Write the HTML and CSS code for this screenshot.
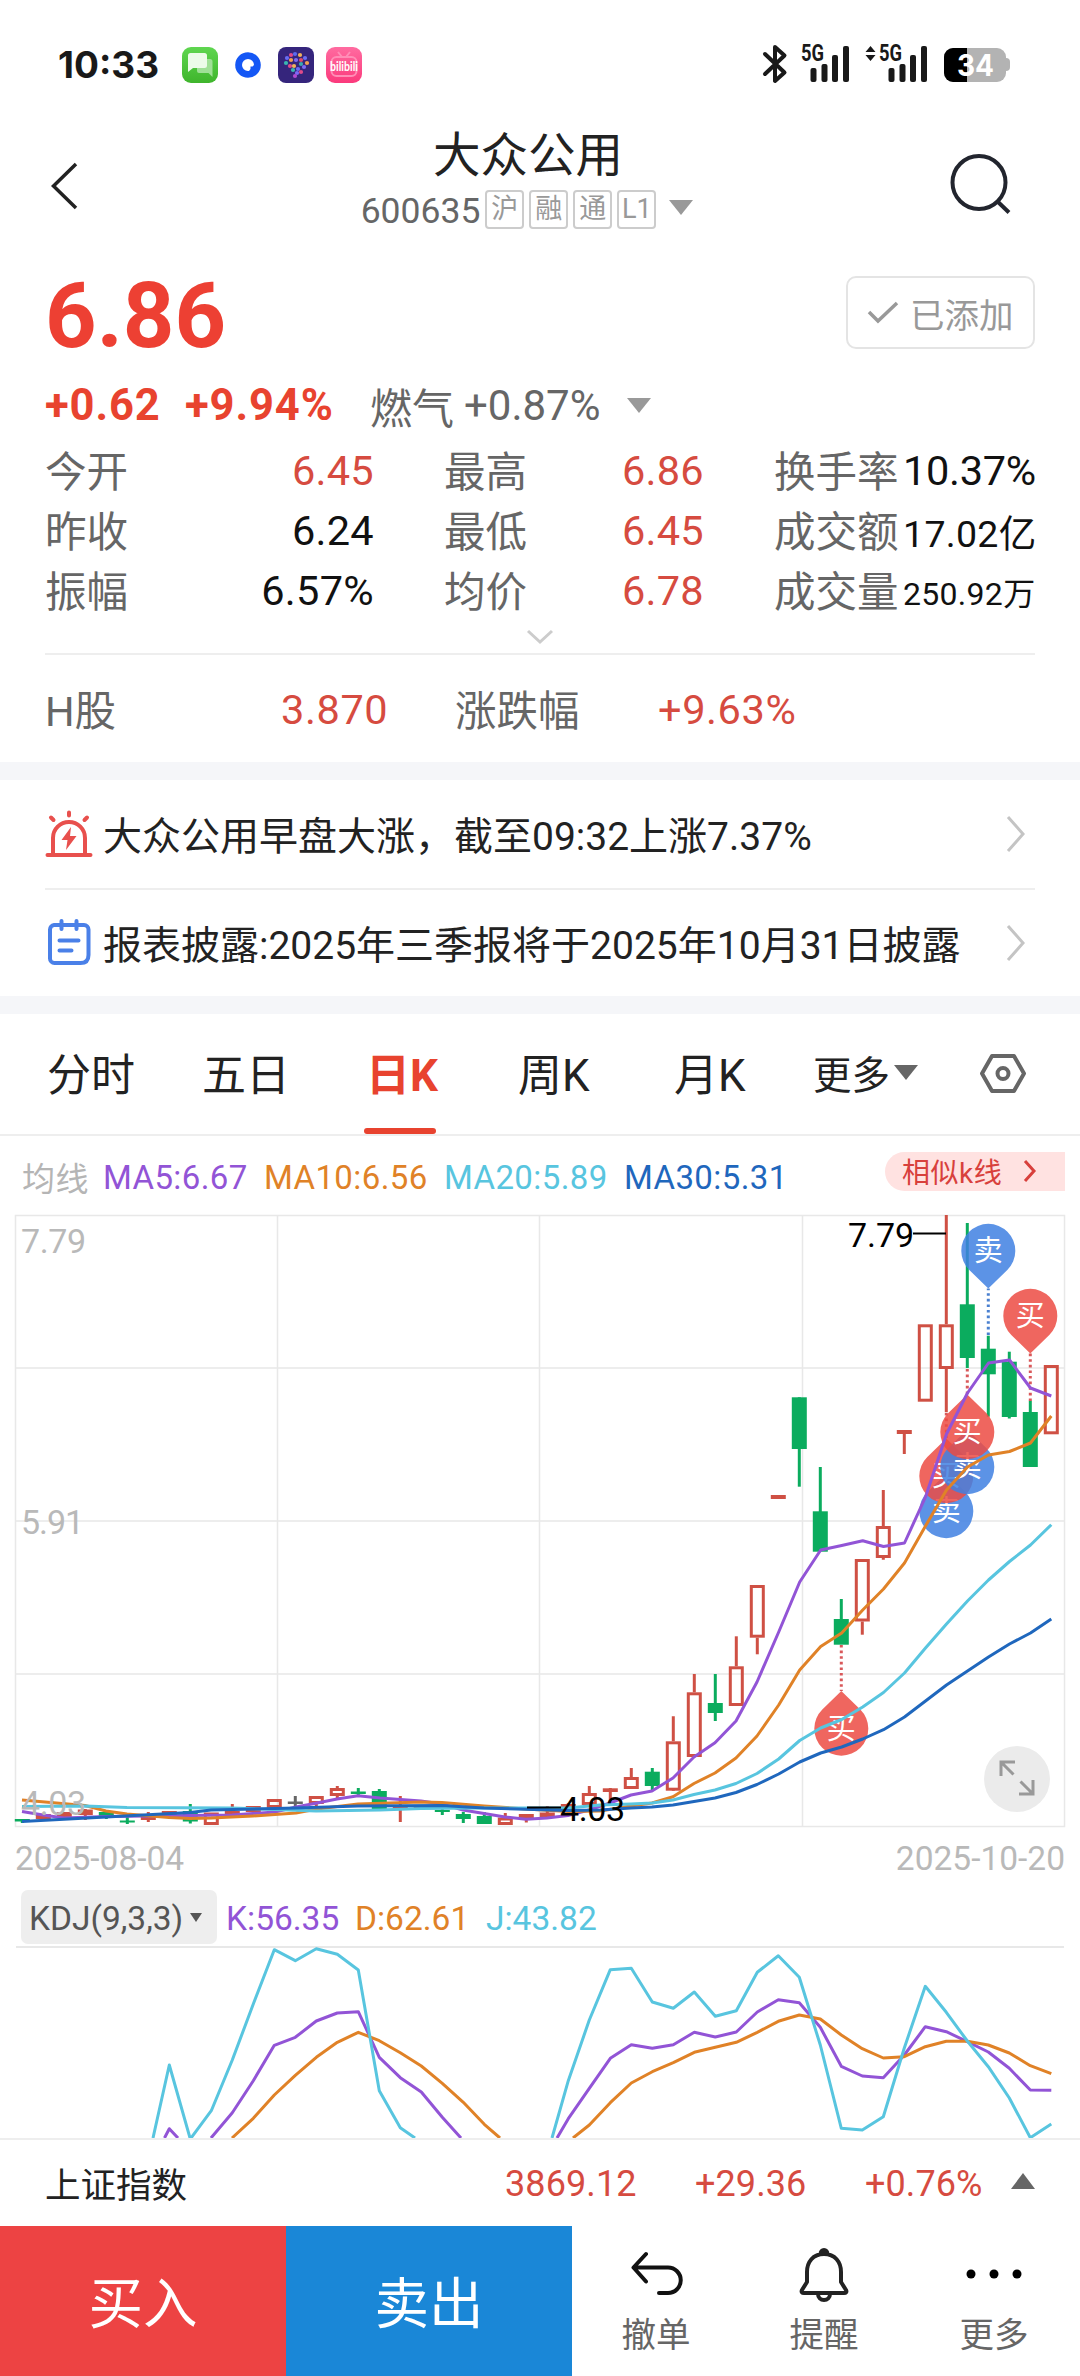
FILE: index.html
```html
<!DOCTYPE html>
<html lang="zh-CN">
<head>
<meta charset="utf-8">
<title>大众公用 600635</title>
<link rel="stylesheet" href="styles.css">
</head>
<body>
<div class="status">
  <span class="clock">10:33</span>
  <svg class="apps" width="186" height="40" viewBox="180 45 186 40">
    <defs>
      <linearGradient id="gm" x1="0" y1="0" x2="0" y2="1"><stop offset="0" stop-color="#5fd650"/><stop offset="1" stop-color="#3fb52c"/></linearGradient>
      <linearGradient id="gb" x1="0" y1="0" x2="0" y2="1"><stop offset="0" stop-color="#ff6ba0"/><stop offset="1" stop-color="#fb3a7c"/></linearGradient>
    </defs>
    <rect x="182" y="47" width="36" height="36" rx="9" fill="url(#gm)"/>
    <path d="M197 59h13a2.500 2.500 0 0 1 2.500 2.500V77l-4-4h-9.500a2 2 0 0 1-2-2z" fill="#9fe096"/>
    <path d="M190.500 53h14a2.500 2.500 0 0 1 2.500 2.500v10a2.500 2.500 0 0 1-2.500 2.500H193l-5 4V55.500a2.500 2.500 0 0 1 2.500-2.500z" fill="#ecfbe9"/>
    <circle cx="248" cy="65" r="12.800" fill="#1457f5"/>
    <path d="M248 59a6 6 0 0 1 6 6l-1.500 1.500h-2V69l-1.500 2h-1a6 6 0 0 1 0-12z" fill="#fff"/>
    <rect x="278" y="47" width="36" height="36" rx="8" fill="#35257c"/>
    <g id="dots"></g>
    <rect x="326" y="47" width="36" height="36" rx="9" fill="url(#gb)"/>
    <rect x="331.500" y="57" width="25" height="19" rx="5" fill="none" stroke="#ff8db6" stroke-width="2"/>
    <path d="M338 52l4 5M350 52l-4 5" stroke="#ff8db6" stroke-width="2"/>
    <text x="330" y="71" class="bili" textLength="28" lengthAdjust="spacingAndGlyphs">bilibili</text>
  </svg>
  <svg class="signals" width="250" height="52" viewBox="760 38 250 52">
    <path d="M765 54l19.500 18.500L775 81V47l9.500 8.500L765 74" fill="none" stroke="#191919" stroke-width="4" stroke-linejoin="round" stroke-linecap="round"/>
    <g fill="#191919">
      <text x="801" y="61" class="net" textLength="23" lengthAdjust="spacingAndGlyphs">5G</text>
      <rect x="810.500" y="68" width="6" height="14" rx="2"/><rect x="821.500" y="64" width="6" height="18" rx="2"/><rect x="832" y="55" width="6" height="27" rx="2"/><rect x="843" y="46" width="6" height="36" rx="2"/>
      <path d="M865.500 52l5-6 5 6zM865.500 55l5 6 5-6z"/>
      <text x="879" y="61" class="net" textLength="23" lengthAdjust="spacingAndGlyphs">5G</text>
      <rect x="888.500" y="68" width="6" height="14" rx="2"/><rect x="899.500" y="64" width="6" height="18" rx="2"/><rect x="910" y="55" width="6" height="27" rx="2"/><rect x="921" y="46" width="6" height="36" rx="2"/>
    </g>
    <rect x="1000" y="58" width="10" height="13" rx="4" fill="#b3b3b3"/>
    <rect x="944" y="48" width="62" height="34" rx="9" fill="#b3b3b3"/>
    <path d="M967 48H953a9 9 0 0 0-9 9v16a9 9 0 0 0 9 9h14z" fill="#000"/>
    <text x="957" y="76" class="bat" textLength="37" lengthAdjust="spacingAndGlyphs">34</text>
  </svg>
</div>

<header class="head">
  <svg width="34" height="54" viewBox="48 159 34 54"><path d="M76 164L53.500 186 76 208" fill="none" stroke="#222" stroke-width="3.500"/></svg>
  <div class="title">
    <h1>大众公用</h1>
    <div class="code"><span>600635</span><i>沪</i><i>融</i><i>通</i><i>L1</i><b class="down"></b></div>
  </div>
  <svg width="66" height="66" viewBox="948 154 66 66"><circle cx="979" cy="183.500" r="26.500" fill="none" stroke="#22252e" stroke-width="4"/><path d="M997 202l12 11.500" stroke="#22252e" stroke-width="4"/></svg>
</header>

<section class="quote">
  <div class="price-row">
    <strong>6.86</strong>
    <div class="added"><svg width="32" height="24" viewBox="0 0 32 24"><path d="M2 11l9 9L30 2" fill="none" stroke="#999" stroke-width="3.500"/></svg><span>已添加</span></div>
  </div>
  <div class="change"><b>+0.62</b><b>+9.94%</b><span>燃气</span><em>+0.87%</em><i class="down"></i></div>
  <div class="stats">
    <label>今开</label><span class="up">6.45</span><label>最高</label><span class="up">6.86</span><label>换手率</label><span class="pc">10.37%</span>
    <label>昨收</label><span>6.24</span><label>最低</label><span class="up">6.45</span><label>成交额</label><span class="mid">17.02亿</span>
    <label>振幅</label><span>6.57%</span><label>均价</label><span class="up">6.78</span><label>成交量</label><span class="small">250.92万</span>
  </div>
  <div class="more"><svg width="30" height="18" viewBox="0 0 30 18"><path d="M3 3l12 11L27 3" fill="none" stroke="#ccc" stroke-width="3"/></svg></div>
  <div class="hshare"><label>H股</label><span class="up">3.870</span><label>涨跌幅</label><span class="up">+9.63%</span></div>
</section>

<section class="news">
  <div class="item">
    <svg width="48" height="50" viewBox="45 808 48 50"><g fill="none" stroke="#e8504d" stroke-width="4" stroke-linecap="round"><path d="M53 853v-16a16 16 0 0 1 32 0v16M47.500 854h43M69 811.500v3M51 816.500l2.500 2.500M87 816.500l-2.500 2.500" /></g><path d="M71 826l-9.500 13h6L66 849l10.500-14h-6.500z" fill="#e8504d"/></svg>
    <p>大众公用早盘大涨，截至09:32上涨7.37%</p>
    <svg class="go" width="22" height="38" viewBox="0 0 22 38"><path d="M3 2l15 17L3 36" fill="none" stroke="#c4c4c4" stroke-width="3"/></svg>
  </div>
  <div class="item">
    <svg width="48" height="50" viewBox="45 918 48 50"><g fill="none" stroke="#4a80e8" stroke-width="4" stroke-linecap="round"><path d="M54 925h30a4.500 4.500 0 0 1 4.500 4.500V955q0 8-8 8H54.500a4.500 4.500 0 0 1-4.500-4.500v-29a4.500 4.500 0 0 1 4-4.500zM61.500 921v8M76.500 921v8M59.500 940.500h19M59.500 950.500h12"/></g></svg>
    <p>报表披露:2025年三季报将于2025年10月31日披露</p>
    <svg class="go" width="22" height="38" viewBox="0 0 22 38"><path d="M3 2l15 17L3 36" fill="none" stroke="#c4c4c4" stroke-width="3"/></svg>
  </div>
</section>

<nav class="tabs">
  <span>分时</span><span>五日</span><span class="on">日K</span><span>周K</span><span>月K</span><span class="tm">更多<i class="down dark"></i></span>
  <svg width="50" height="46" viewBox="977 1050 50 46"><path d="M991 1055h22l10 17.500-10 17.500h-22l-10-17.500z" fill="none" stroke="#666" stroke-width="4" stroke-linejoin="round"/><circle cx="1002" cy="1072.500" r="5.500" fill="none" stroke="#666" stroke-width="4"/></svg>
</nav>

<div class="ma"><span>均线</span><span class="p">MA5:6.67</span><span class="o">MA10:6.56</span><span class="c">MA20:5.89</span><span class="b">MA30:5.31</span>
  <div class="similar">相似k线<svg width="14" height="24" viewBox="0 0 14 24"><path d="M2 2l9 10-9 10" fill="none" stroke="#d8403c" stroke-width="3"/></svg></div>
</div>

<svg class="kline" width="1080" height="630" viewBox="0 1206 1080 630">
  <g stroke="#e8e8e8" stroke-width="1.500" fill="none">
    <rect x="15.500" y="1215.500" width="1049" height="611"/>
    <path d="M16 1368H1064M16 1521H1064M16 1674H1064M277.500 1216V1826M539.500 1216V1826M802.500 1216V1826"/>
  </g>
  <g id="candles"></g>
  <g id="pins"></g>
  <g id="averages"></g>
  <g class="axis"><text x="21" y="1253" textLength="65">7.79</text><text x="21" y="1534" textLength="63">5.91</text><text x="21" y="1815" textLength="65">4.03</text></g>
  <path d="M913 1233.500h33M527 1807.500h34" stroke="#000" stroke-width="2"/>
  <g class="peak"><text x="848" y="1247" textLength="66">7.79</text><text x="560" y="1821" textLength="65">4.03</text></g>
  <circle cx="1017" cy="1779" r="33" fill="#ebebeb"/>
  <path d="M1001 1776v-14h14M1001.500 1762.500l12 12M1033 1780v14h-14M1032.500 1793.500l-12-12" fill="none" stroke="#999" stroke-width="3"/>
</svg>

<div class="dates"><span>2025-08-04</span><span>2025-10-20</span></div>

<div class="kdj"><div class="pick"><span>KDJ(9,3,3)</span><i></i></div><span class="p">K:56.35</span><span class="o">D:62.61</span><span class="c">J:43.82</span></div>
<svg class="osc" width="1080" height="192" viewBox="0 1946 1080 192"><path d="M16 1947H1064" stroke="#e8e8e8" stroke-width="2"/><g id="osc"></g></svg>

<div class="index"><span>上证指数</span><b>3869.12</b><b>+29.36</b><b>+0.76%</b><i></i></div>

<footer class="actions">
  <div class="buy">买入</div><div class="sell">卖出</div>
  <div class="tools">
    <div><svg width="60" height="60" viewBox="626 2244 60 60"><path d="M646 2254l-12.500 13.500 12.500 14M634 2267.500h34a12.500 12.500 0 0 1 0 25.500h-9" fill="none" stroke="#111" stroke-width="4" stroke-linecap="round" stroke-linejoin="round"/></svg><span>撤单</span></div>
    <div><svg width="60" height="60" viewBox="794 2244 60 60"><path d="M820.500 2254a3.500 4 0 0 1 7 0M824 2254c-11 0-17 8-17 18v10l-5 8c-1 2 0 3 2 3h40c2 0 3-1 2-3l-5-8v-10c0-10-6-18-17-18zM818 2294a6 6 0 0 0 12 0" fill="none" stroke="#222" stroke-width="4" stroke-linejoin="round"/></svg><span>提醒</span></div>
    <div><svg width="60" height="60" viewBox="965 2244 60 60"><g fill="#000"><circle cx="972" cy="2274" r="4.500"/><circle cx="995" cy="2274" r="4.500"/><circle cx="1018" cy="2274" r="4.500"/></g></svg><span>更多</span></div>
  </div>
</footer>
<script src="chart.js"></script>
</body>
</html>
```
FILE: styles.css
```css
* { box-sizing: border-box; margin: 0; padding: 0; }
body { width: 1080px; height: 2376px; overflow: hidden; background: #fff; color: #222; font-family: Roboto, "Noto Sans CJK SC", sans-serif; display: flex; flex-direction: column; }
body > * { flex: none; }
svg { display: block; flex: none; }
i, em { font-style: normal; }
span, b, label, i { white-space: nowrap; }
.down { border: 12px solid transparent; border-top: 15px solid #999; border-bottom: 0; display: inline-block; width: 0; height: 0; }
.dark { border-top-color: #666; }

.status { height: 128px; padding: 0 70px 0 58px; display: flex; align-items: center; }
.clock { width: 122px; font: 700 37px Inter, sans-serif; color: #191919; }
.apps { margin-top: 2px; overflow: visible; }
.signals { margin-left: auto; overflow: visible; }
.bili { font: 700 13px Lato, sans-serif; fill: #fff; }
.net { font: 700 23px Roboto, sans-serif; }
.bat { font: 700 30px Inter, sans-serif; fill: #fff; }

.head { height: 132px; padding: 0 66px 0 48px; display: flex; align-items: center; justify-content: space-between; }
.head > svg { margin-top: -16px; }
.title { display: flex; flex-direction: column; align-items: center; margin-left: 24px; height: 132px; padding-top: 4px; }
h1 { font-size: 47.500px; font-weight: 400; line-height: 48px; padding-left: 2px; }
.code { display: flex; align-items: center; height: 39px; margin-top: 10px; gap: 5px; color: #666; font-size: 35.500px; }
.code span { padding-top: 2px; }
.code i { width: 39px; height: 39px; border: 2px solid #ccc; border-radius: 4px; font-size: 27px; line-height: 34px; text-align: center; color: #999; }
.code .down { margin-left: 8px; margin-top: -4px; }

.quote { height: 502px; padding: 0 45px; display: flex; flex-direction: column; }
.price-row { display: flex; justify-content: space-between; height: 110px; padding-top: 16px; }
.price-row strong { font-size: 90px; line-height: 82px; color: #ed4033; }
.added { width: 189px; height: 73px; border: 2px solid #e4e4e4; border-radius: 10px; display: flex; align-items: center; padding-left: 19px; gap: 11px; font-size: 34.500px; color: #999; }
.change { height: 70px; padding-top: 2px; display: grid; grid-template-columns: 140px 185px 94px 163px 24px; align-items: center; font-size: 42px; color: #666; }
.change b { color: #e8432f; font-size: 43.500px; letter-spacing: .9px; }
.stats { display: grid; height: 180px; grid-template-columns: 100px 229px 170px 160px 199px 132px; grid-template-rows: repeat(3, 60px); align-items: center; font-size: 41.500px; }
.stats span { text-align: right; color: #111; letter-spacing: .3px; padding-top: 4px; }
.stats label, .hshare label { color: #666; }
.stats label { padding-top: 1px; }
.stats label:nth-of-type(3n+2), .stats label:nth-of-type(3n) { padding-left: 70px; }
.stats .up, .up { color: #d64b40; }
.stats .pc { letter-spacing: -.3px; }
.stats .mid { font-size: 37.500px; padding-right: 2px; }
.stats .small { font-size: 32px; padding-right: 2px; }
.more { height: 36px; display: flex; align-items: center; justify-content: center; border-bottom: 2px solid #eee; padding-top: 2px; }
.hshare { height: 108px; display: grid; grid-template-columns: 236px 174px 203px 200px; align-items: center; font-size: 41.500px; }
.hshare span { letter-spacing: .6px; padding-top: 2px; }

.news { border: solid #f5f6f9; border-width: 18px 0; height: 252px; padding: 0 45px; }
.item { height: 108px; display: flex; align-items: center; gap: 10px; font-size: 39px; }
.item p { padding-bottom: 2px; }
.item + .item { border-top: 2px solid #eee; }
.go { margin-left: auto; margin-right: 8px; }

.tabs { height: 122px; border-bottom: 2px solid #eee; display: grid; grid-template-columns: 155px 163px 153px 156px 139px 165px 50px; padding-left: 47px; align-items: center; font-size: 44px; }
.tabs span { display: flex; align-items: center; height: 120px; padding-bottom: 4px; }
.tabs .on { font-weight: 700; color: #e8432f; position: relative; padding-left: 1px; }
.tabs .on::after { content: ""; position: absolute; left: -1px; bottom: 0; width: 72px; height: 6px; border-radius: 3px; background: #e8432f; }
.tabs .tm { font-size: 38.500px; gap: 4px; }

.ma { height: 70px; padding: 12px 0 0 22px; display: grid; grid-template-columns: 81px 161px 180px 180px 261px 180px; align-items: center; font-size: 33px; color: #b5b5b5; letter-spacing: .4px; }
.p { color: #9254d6; } .o { color: #e08227; } .c { color: #58c5df; } .b { color: #1f67bd; }
.similar { height: 39px; margin-top: -12px; background: #ffe2e1; border-radius: 20px 0 0 20px; display: flex; align-items: center; gap: 21px; padding-left: 17px; font-size: 28px; color: #d8403c; letter-spacing: .5px; }
.axis text { font-size: 34px; fill: #b9b9b9; }
.peak text { font-size: 34px; fill: #000; }
.dates { height: 54px; padding: 0 15px 10px; display: flex; align-items: center; justify-content: space-between; font-size: 33.500px; color: #b9b9b9; }
.kdj { height: 56px; padding: 0 0 2px 21px; display: grid; grid-template-columns: 205px 129px 131px 150px; align-items: center; font-size: 33.500px; }
.kdj span { padding-top: 2px; }
.pick { width: 196px; height: 54px; border-radius: 7px; background: #eee; display: flex; align-items: center; padding-left: 8px; gap: 7px; color: #555; }
.pick i { border: 6px solid transparent; border-top: 9px solid #555; border-bottom: 0; }
.index { height: 88px; border-top: 2px solid #eee; padding-left: 45px; display: grid; grid-template-columns: 460px 190px 170px 146px 24px; align-items: center; font-size: 35.500px; }
.index span { padding-bottom: 2px; }
.index b { font-weight: 400; color: #d64b40; font-size: 36px; letter-spacing: .1px; padding-top: 2px; }
.index i { border: 12px solid transparent; border-bottom: 16px solid #666; border-top: 0; margin-top: -4px; }
.actions { height: 150px; display: flex; color: #fff; font-size: 54.500px; }
.buy, .sell { width: 286px; background: #ed4343; display: flex; align-items: center; justify-content: center; padding-bottom: 3px; }
.sell { background: #1a87d7; }
.tools { display: grid; grid-template-columns: 168px 168px 172px; flex: 1; font-size: 34.500px; color: #666; }
.tools div { display: flex; flex-direction: column; align-items: center; padding-top: 18px; }
.tools span { line-height: 50px; margin-top: 6px; }
.pin { font-size: 29px; fill: #fff; text-anchor: middle; }
```
FILE: chart.js
```js
const RED = '#cf5044', GREEN = '#0bac5e', STEP = 21, X0 = 22.3;
const xAt = i => X0 + STEP * i;
const put = (id, html) => { document.getElementById(id).innerHTML = html; };

// type (h hollow, r solid red, g green, n neutral), body top, body bottom, wick top, wick bottom
const candles = [
  ['g',1819,1821.5,1819,1823],['r',1814,1819],['r',1812,1817],['r',1809.5,1815,1809,1820],['g',1812,1817,1812,1819],
  ['g',1820.5,1822.5,1817,1824],['r',1817,1820,1812,1822],['r',1811,1815],['g',1811,1821.5,1804,1823.5],['h',1812.5,1825],
  ['r',1811,1816,1804,1816],['r',1806,1812],['h',1799,1808],['n',1801.5,1804,1796,1806],['h',1796,1804,1796,1807],
  ['h',1788,1796,1786,1798],['g',1791.5,1794,1788,1796],['g',1791,1809,1789,1811],['r',1807,1810,1796,1822],['r',1805,1809],
  ['g',1810,1812,1808,1815],['g',1814,1819,1812,1823],['g',1816,1824,1812,1824],['h',1817.5,1825,1813,1825],['r',1814,1819,1814,1822.5],
  ['r',1812.5,1817.5,1806,1818],['r',1804,1807,1803,1810],['h',1793,1805,1786,1805],['r',1788.3,1792,1788,1802],['h',1777,1789,1768,1789],
  ['g',1771.7,1786,1768,1790],['h',1741.3,1790.7,1716.3,1790],['h',1692.3,1757,1674,1757],['g',1703,1713,1674,1721],['h',1666.3,1706,1636.3,1706],
  ['h',1585,1637.7,1585,1654.3],['r',1495,1499],['g',1397.3,1449,1397.3,1486.7],['g',1511.3,1551.7,1467,1551],['g',1619,1644.7,1599,1644],
  ['h',1559,1621.5,1559,1634.7],['h',1526,1558,1490,1559.7],['r',1430,1434,1430,1454],['h',1324.3,1401.7],['h',1324.3,1369,1215,1412.3],
  ['g',1304.3,1358,1223,1368],['g',1348.7,1374.3,1335.7,1416.7],['g',1361.7,1417,1351.7,1418.5],['g',1412,1467,1400.7,1467],['h',1365,1434.3]
];
put('candles', candles.map(([t, a, b, w1, w2], i) => {
  const x = xAt(i), c = t === 'g' ? GREEN : t === 'n' ? '#666' : RED;
  let s = '';
  if (w1 !== undefined) {
    const d = t === 'h' ? `M${x} ${w1}V${a}M${x} ${b}V${w2}` : `M${x} ${w1}V${w2}`;
    s += `<path d="${d}" stroke="${c}" stroke-width="3"/>`;
  }
  s += t === 'h'
    ? `<rect x="${x - 6}" y="${a + 1.5}" width="12" height="${b - a - 3}" fill="none" stroke="${c}" stroke-width="3"/>`
    : `<rect x="${x - 7.5}" y="${a}" width="15" height="${b - a}" fill="${c}"/>`;
  return s;
}).join(''));

// label, colour, candle index, circle centre, direction of the tip, end of the dotted stem
const BUY = ['买', '#ec4b43', '#d9585a'], SELL = ['卖', '#4080e2', '#4a80d0'];
const pins = [
  [SELL,44,1511,-1,1473],[BUY,44,1476,-1,1413],[SELL,45,1467,-1,1430],[BUY,45,1432,-1,1369],
  [SELL,46,1251,1,1335],[BUY,48,1316,1,1401],[BUY,39,1728.5,-1,1645]
];
put('pins', pins.map(([[label, fill, stem], i, cy, dir, end]) => {
  const x = xAt(i), tip = cy + dir * 37.5, y = cy + dir * 19;
  const arc = dir > 0 ? `A27 27 0 1 1 ${x + 19} ${y}` : `A27 27 0 1 0 ${x + 19} ${y}`;
  return `<path d="M${x} ${end}V${tip}" stroke="${stem}" stroke-width="3" stroke-dasharray="2.6 3"/>` +
    `<g opacity=".85"><path d="M${x} ${tip}L${x - 19} ${y}${arc}Z" fill="${fill}"/></g>` +
    `<text class="pin" x="${x}" y="${cy + 10}">${label}</text>`;
}).join(''));

const line = (pts, c) => `<polyline points="${pts}" fill="none" stroke="${c}" stroke-width="3" stroke-linejoin="round"/>`;
put('averages',
  line('22,1811.5 43,1815 64,1818 106,1816.5 148,1816 190,1815.5 232,1815 275,1812 296,1807 317,1803 337,1799 358,1795.7 380,1798 421,1801 442,1804 463,1810 484,1813.5 505,1817 526,1819.3 547,1818 568,1815.5 589,1810 610,1803 631,1795 652,1791 673,1778 694,1757 715,1742.7 736,1721 757,1682 778.7,1632 799.7,1582 820.7,1550 841.7,1545.5 862.7,1540.7 883.5,1546.5 904.5,1543 925.5,1497 946.5,1434 967.5,1393 988.5,1363 1009.5,1360 1030.5,1388 1051.3,1396', '#9254d6') +
  line('22,1800 85,1805.5 106,1811 127,1814 169,1817.5 190,1818.5 211,1818 253,1816 296,1813 317,1809 358,1804 421,1802 442,1802.5 484,1806 526,1809 568,1811.500 600,1811 631,1806 652,1803 673,1796.7 694,1783.5 715,1773 736,1758 757,1736 778.7,1705 799.7,1670 820.7,1646.5 841.7,1633 862.7,1610 883.5,1589 904.5,1563 925.5,1526 946.5,1490 967.5,1467 988.5,1455 1009.5,1451.5 1030.5,1443 1051.3,1416', '#e08227') +
  line('22,1806.5 85,1806 127,1807.5 232,1808 316,1811 380,1810 421,1808.5 484,1808 568,1808 600,1805 631,1804 652,1803 673,1800 694,1794.5 715,1790 736,1783.5 757,1773.5 778.7,1759 799.7,1740.5 820.7,1728 841.7,1719.5 862.7,1707 883.5,1692.5 904.5,1673 925.5,1648 946.5,1624 967.5,1601 988.5,1580 1009.5,1561.5 1030.5,1545 1051.3,1524.7', '#58c5df') +
  line('22,1821.5 106,1817 190,1812.5 211,1810 296,1808 358,1806 442,1805.5 484,1808 568,1810.5 600,1810 631,1808 652,1807 673,1805 694,1801.5 715,1798 736,1792.5 757,1784.5 778.7,1774 799.7,1762 820.7,1753 841.7,1747 862.7,1739 883.5,1729.7 904.5,1717 925.5,1701 946.5,1685 967.5,1671 988.5,1657 1009.5,1644 1030.5,1633 1051.3,1619', '#1f67bd'));

const series = (from, ys) => ys.map((y, k) => `${xAt(from + k)},${y}`).join(' ');
put('osc',
  line('164.5,2138 169.3,2128.7 178,2138', '#9254d6') +
  line('211,2138 ' + series(10, [2112.7,2080.7,2045.3,2037.3,2021,2013,2011.7,2057.3,2077.7,2092,2117.3]) + ' 461,2138', '#9254d6') +
  line('557,2138 ' + series(26, [2118.7,2088.3,2058.3,2044.7,2048.3,2044.7,2032.3,2037,2032,2012,1999.7,2002.7,2027.3,2066.3,2076,2077.7,2055,2026.7,2031.7,2041.7,2052,2068.3,2090,2090.3]), '#9254d6') +
  line('232,2138 ' + series(11, [2118.3,2095,2075.3,2057.3,2042.3,2032.3,2040.7,2052.7,2066,2083.3,2102.3,2124.3]) + ' 500,2138', '#e08227') +
  line('573,2138 ' + series(27, [2125,2102.7,2083,2071.7,2062.7,2052.3,2047.3,2042.3,2032.3,2021.3,2015,2019,2035,2048.7,2058,2056.7,2046.7,2041.3,2041.3,2045,2053,2065.7,2073.7]), '#e08227') +
  line('153,2138 ' + series(7, [2065,2139,2110.7,2060,2004,1949.7,1960.7,1948.7,1954.3,1970,2090.7,2127.7]) + ' 415,2138', '#58c5df') +
  line('552,2138 ' + series(26, [2080.7,2020,1969.7,1968.3,2002,2008.3,1992,2016.3,2010.7,1972.3,1955.7,1977.3,2045,2128.3,2130,2116.7,2048,1986.3,2012.3,2041,2066.7,2098,2137.7,2124]), '#58c5df'));

const specks = [[291,55,'#e04b8a'],[295,54,'#5a6af0'],[300,55,'#f0b35a'],[287,58,'#6a6df5'],[305,58,'#6a6df5'],[291,60,'#f0a050'],[296,60,'#7d6af5'],[301,60,'#e04b6a'],[286,63,'#39b8b0'],[307,63,'#f0a050'],[290,66,'#e04b8a'],[294,66,'#f0b35a'],[301,64,'#39a8b0'],[304,67,'#7d6af5'],[298,69,'#6a6df5'],[293,70,'#39b8b0'],[301,72,'#e04b8a'],[297,73,'#7d6af5'],[295,76,'#b04bd0']];
put('dots', specks.map(([x, y, c]) => `<circle cx="${x}" cy="${y}" r="2.1" fill="${c}"/>`).join(''));
```
